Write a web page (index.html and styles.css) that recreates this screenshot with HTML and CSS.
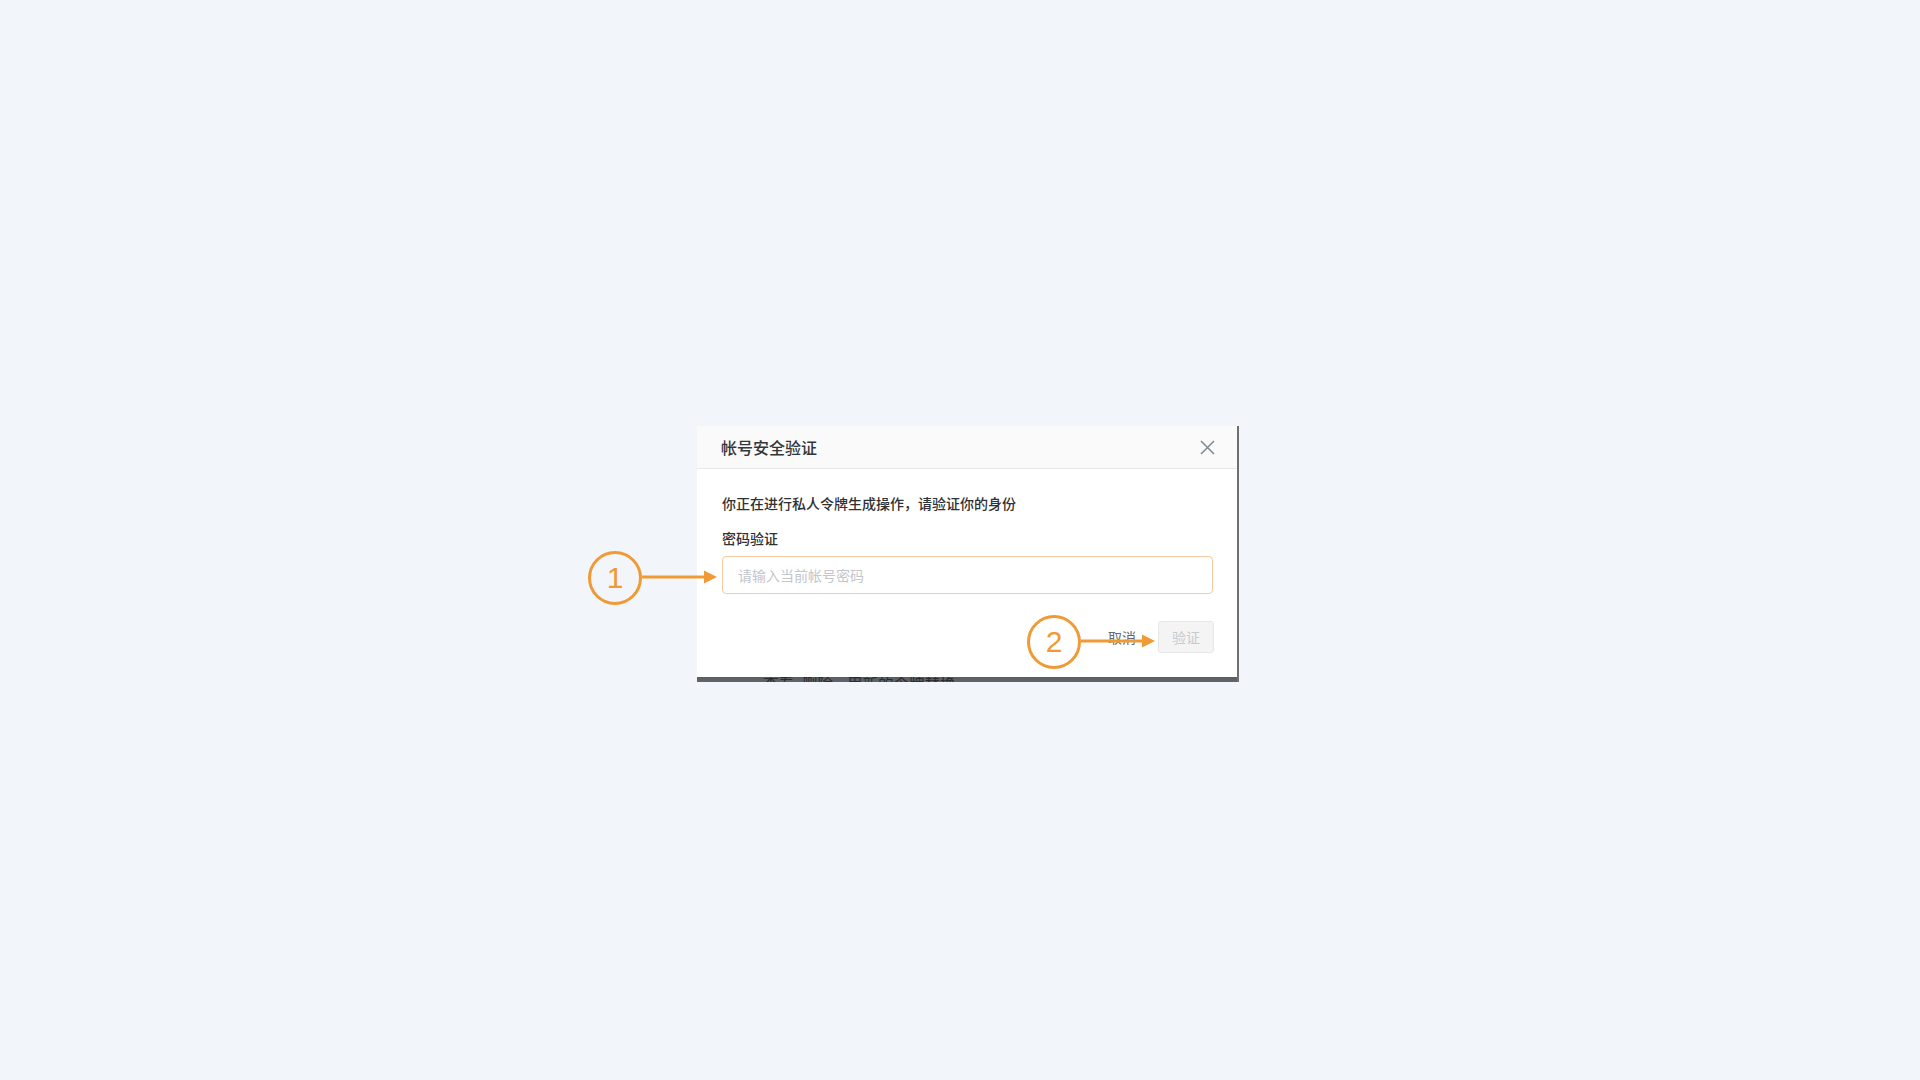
FILE: index.html
```html
<!DOCTYPE html>
<html lang="zh-CN">
<head>
<meta charset="utf-8">
<title>帐号安全验证</title>
<link rel="stylesheet" href="styles.css">
</head>
<body>
<div class="stage">
  <div class="dialog">
    <div class="dlg-head">
      <span class="dlg-title">帐号安全验证</span>
      <span class="dlg-close">
        <svg width="15" height="15" viewBox="0 0 15 15"><path d="M1 1L14 14M14 1L1 14" stroke="#7d8893" stroke-width="1.5" fill="none"/></svg>
      </span>
    </div>
    <div class="dlg-body">
      <p class="intro">你正在进行私人令牌生成操作，请验证你的身份</p>
      <div class="field-label">密码验证</div>
      <div class="field-input"><span class="placeholder">请输入当前帐号密码</span></div>
    </div>
    <div class="dlg-foot">
      <span class="btn-cancel">取消</span>
      <span class="btn-verify">验证</span>
    </div>
    <div class="dlg-strip"><span class="strip-a">查看</span><span class="strip-b">删除</span><span class="strip-c">用新的令牌替换</span></div>

    <div class="mark mark-1">1</div>
    <svg class="arrow arrow-1" width="76" height="14" viewBox="0 0 76 14"><path d="M0 7H64" stroke="#f09a36" stroke-width="3"/><path d="M62 0.5L75 7L62 13.5Z" fill="#f09a36"/></svg>
    <div class="mark mark-2">2</div>
    <svg class="arrow arrow-2" width="75" height="14" viewBox="0 0 75 14"><path d="M0 7H63" stroke="#f09a36" stroke-width="3"/><path d="M61 0.5L74 7L61 13.5Z" fill="#f09a36"/></svg>
  </div>
</div>
</body>
</html>
```
FILE: styles.css
```css
html, body {
  margin: 0;
  padding: 0;
  background: #f2f6fa;
}
body {
  width: 1920px;
  height: 1080px;
  overflow: hidden;
  font-family: "Noto Sans CJK SC", "Noto Sans", sans-serif;
  color: #303133;
}
.stage {
  padding-top: 426px;
  padding-left: 697px;
}
.dialog {
  position: relative;
  width: 540px;
  background: #ffffff;
  border-right: 2px solid #6c7075;
}
.dlg-head {
  height: 42px;
  display: flex;
  align-items: center;
  justify-content: space-between;
  padding: 0 22px 0 24px;
  background: #fafafa;
  border-bottom: 1px solid #e6e8eb;
}
.dlg-title {
  font-size: 16px;
  font-weight: 500;
  color: #333639;
  line-height: 42px;
  margin-top: -1px;
}
.dlg-close {
  display: flex;
  width: 15px;
  height: 15px;
}
.dlg-body {
  padding: 24px 24px 0 25px;
}
.intro {
  margin: 0;
  font-size: 14px;
  line-height: 20px;
  font-weight: 500;
  color: #303133;
}
.field-label {
  margin-top: 15px;
  margin-bottom: 8px;
  font-size: 14px;
  line-height: 20px;
  font-weight: 500;
  color: #303133;
}
.field-input {
  height: 38px;
  box-sizing: border-box;
  border: 1px solid #f7c9a0;
  border-radius: 4px;
  padding: 0 15px;
  display: flex;
  align-items: center;
}
.placeholder {
  font-size: 14px;
  line-height: 20px;
  color: #c3c6cc;
}
.dlg-foot {
  display: flex;
  justify-content: flex-end;
  align-items: center;
  padding: 27px 23px 24px 25px;
}
.btn-cancel {
  font-size: 14px;
  line-height: 20px;
  color: #646a72;
  margin-right: 22px;
}
.btn-verify {
  height: 32px;
  box-sizing: border-box;
  padding: 0 13px;
  line-height: 30px;
  font-size: 14px;
  color: #c8cacd;
  background: #f4f4f5;
  border: 1px solid #e6e7e9;
  border-radius: 3px;
}
.dlg-strip {
  display: flex;
  height: 5px;
  overflow: hidden;
  padding-left: 66px;
  background: linear-gradient(#5a5e63, #62666b);
}
.dlg-strip span {
  display: block;
  margin-top: -2px;
  font-size: 15.5px;
  line-height: 16px;
  color: #2b2e31;
  white-space: nowrap;
}
.strip-b {
  margin-left: 8px;
}
.strip-c {
  margin-left: 14px;
}
.mark {
  position: absolute;
  width: 48px;
  height: 48px;
  border: 3px solid #f09a36;
  border-radius: 50%;
  display: flex;
  align-items: center;
  justify-content: center;
  font-family: "Liberation Sans", Arial, sans-serif;
  font-size: 30px;
  line-height: 1;
  color: #f09a36;
  background: transparent;
}
.mark-1 {
  left: -109px;
  top: 125px;
}
.mark-2 {
  left: 330px;
  top: 189px;
}
.arrow {
  position: absolute;
}
.arrow-1 {
  left: -55px;
  top: 144px;
}
.arrow-2 {
  left: 384px;
  top: 208px;
}
```
